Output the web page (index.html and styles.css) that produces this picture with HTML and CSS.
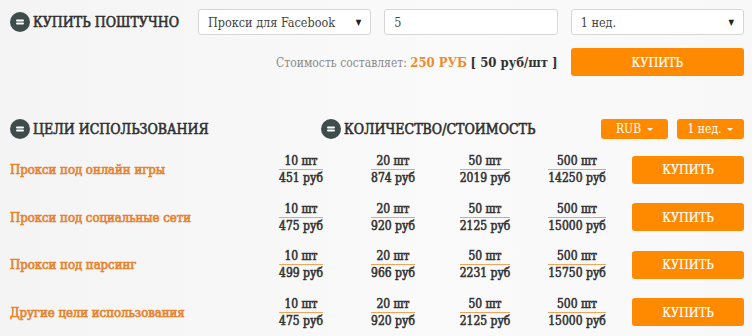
FILE: index.html
```html
<!DOCTYPE html>
<html lang="ru">
<head>
<meta charset="UTF-8">
<meta name="viewport" content="width=device-width, initial-scale=1.0">
<title>Купить прокси</title>
<link rel="stylesheet" href="styles.css">
</head>
<body>
    <section class="single">
        <h2 class="title">
            <svg class="ico" viewBox="0 0 20 20"><circle cx="10" cy="10" r="10" fill="#3f4c4c"/><rect x="6" y="7.5" width="8" height="2" rx="1" fill="#fff"/><rect x="6" y="10.5" width="8" height="2" rx="1" fill="#fff"/></svg>
            КУПИТЬ ПОШТУЧНО
        </h2>
        <div class="field select">Прокси для Facebook <span class="caret">&#9660;</span></div>
        <div class="field">5</div>
        <div class="field select">1 нед. <span class="caret">&#9660;</span></div>

        <p class="cost">Стоимость составляет: <b class="sum">250 РУБ</b> <b class="per">[ 50 руб/шт ]</b></p>
        <button class="buy">КУПИТЬ</button>
    </section>

    <section class="purposes">
        <div class="head">
            <h2 class="title goal">
                <svg class="ico" viewBox="0 0 20 20"><circle cx="10" cy="10" r="10" fill="#3f4c4c"/><rect x="6" y="7.5" width="8" height="2" rx="1" fill="#fff"/><rect x="6" y="10.5" width="8" height="2" rx="1" fill="#fff"/></svg>
                ЦЕЛИ ИСПОЛЬЗОВАНИЯ
            </h2>
            <h2 class="title">
                <svg class="ico" viewBox="0 0 20 20"><circle cx="10" cy="10" r="10" fill="#3f4c4c"/><rect x="6" y="7.5" width="8" height="2" rx="1" fill="#fff"/><rect x="6" y="10.5" width="8" height="2" rx="1" fill="#fff"/></svg>
                КОЛИЧЕСТВО/СТОИМОСТЬ
            </h2>
            <div class="pick">
                <button class="drop">RUB <span class="tri"></span></button>
                <button class="drop">1 нед. <span class="tri"></span></button>
            </div>
        </div>

        <div class="plan">
            <span class="goal-name">Прокси под онлайн игры</span>
            <div class="price"><span class="qty">10 шт</span><span>451 руб</span></div>
            <div class="price"><span class="qty">20 шт</span><span>874 руб</span></div>
            <div class="price"><span class="qty">50 шт</span><span>2019 руб</span></div>
            <div class="price"><span class="qty">500 шт</span><span>14250 руб</span></div>
            <button class="buy">КУПИТЬ</button>
        </div>
        <div class="plan">
            <span class="goal-name">Прокси под социальные сети</span>
            <div class="price"><span class="qty">10 шт</span><span>475 руб</span></div>
            <div class="price"><span class="qty">20 шт</span><span>920 руб</span></div>
            <div class="price"><span class="qty">50 шт</span><span>2125 руб</span></div>
            <div class="price"><span class="qty">500 шт</span><span>15000 руб</span></div>
            <button class="buy">КУПИТЬ</button>
        </div>
        <div class="plan">
            <span class="goal-name">Прокси под парсинг</span>
            <div class="price"><span class="qty">10 шт</span><span>499 руб</span></div>
            <div class="price"><span class="qty">20 шт</span><span>966 руб</span></div>
            <div class="price"><span class="qty">50 шт</span><span>2231 руб</span></div>
            <div class="price"><span class="qty">500 шт</span><span>15750 руб</span></div>
            <button class="buy">КУПИТЬ</button>
        </div>
        <div class="plan">
            <span class="goal-name">Другие цели использования</span>
            <div class="price"><span class="qty">10 шт</span><span>475 руб</span></div>
            <div class="price"><span class="qty">20 шт</span><span>920 руб</span></div>
            <div class="price"><span class="qty">50 шт</span><span>2125 руб</span></div>
            <div class="price"><span class="qty">500 шт</span><span>15000 руб</span></div>
            <button class="buy">КУПИТЬ</button>
        </div>
    </section>
</body>
</html>
```

FILE: styles.css
```css
body {
    margin: 0;
    padding: 9px 8px 0 10px;
    background: linear-gradient(90deg, #f4f4f4, #fafafa 60%, #f8f8f8);
    font-family: "DejaVu Serif", serif;
    font-stretch: condensed;
    color: #333333;
    height: 336px;
    box-sizing: border-box;
    overflow: hidden;
}

.title {
    display: flex;
    align-items: center;
    gap: 3px;
    margin: 0;
    font-size: 14px;
    font-weight: normal;
    -webkit-text-stroke: 0.55px #2f2f2f;
    color: #2f2f2f;
    white-space: nowrap;
}

.ico {
    width: 20px;
    height: 20px;
    flex: none;
}

.single {
    display: grid;
    grid-template-columns: 175px repeat(3, 1fr);
    column-gap: 13px;
    row-gap: 13px;
}

.field {
    height: 26px;
    box-sizing: border-box;
    border: 1px solid #d6d6d6;
    border-radius: 3px;
    background: #ffffff;
    padding: 0 9px;
    display: flex;
    align-items: center;
    font-size: 12.5px;
    color: #444444;
}

.select {
    justify-content: space-between;
}

.caret {
    font-size: 8px;
    color: #222222;
}

.cost {
    grid-column: 1 / 4;
    margin: 0;
    text-align: right;
    align-self: center;
    font-size: 12px;
    color: #8a8a8a;
}

.sum {
    color: #f08a2c;
    font-size: 13px;
}

.per {
    color: #333333;
    font-size: 13px;
}

.buy {
    height: 28px;
    border: none;
    border-radius: 3px;
    background: #ff8a00;
    color: #ffffff;
    font-family: inherit;
    font-stretch: condensed;
    font-size: 12.5px;
    -webkit-text-stroke: 0.2px #ffffff;
    cursor: pointer;
}

.purposes {
    margin-top: 43px;
}

.head {
    display: flex;
    align-items: center;
    height: 20px;
}

.goal {
    width: 311px;
}

.pick {
    margin-left: auto;
    display: flex;
    gap: 9px;
}

.drop {
    width: 67px;
    height: 20px;
    border: none;
    border-radius: 3px;
    background: #ff8a00;
    color: #ffffff;
    font-family: inherit;
    font-stretch: condensed;
    font-size: 12px;
    display: flex;
    align-items: center;
    justify-content: center;
    gap: 6px;
    padding: 0;
}

.tri {
    border-left: 3px solid transparent;
    border-right: 3px solid transparent;
    border-top: 3px solid #ffffff;
}

.purposes .head {
    margin-bottom: 7px;
}

.plan {
    display: grid;
    grid-template-columns: 245px repeat(4, 92px) 1fr;
    align-items: center;
    height: 47.5px;
}

.goal-name {
    font-size: 13px;
    -webkit-text-stroke: 0.65px #e8822e;
    color: #e8822e;
}

.price {
    justify-self: center;
    display: flex;
    flex-direction: column;
    align-items: stretch;
    text-align: center;
    font-size: 12px;
    -webkit-text-stroke: 0.55px #333333;
    color: #333333;
    line-height: 14px;
}

.qty {
    border-bottom: 1px solid #f3a35c;
    padding-bottom: 1px;
    margin-bottom: 1px;
}

.plan .buy {
    justify-self: end;
    width: 112px;
}
```
